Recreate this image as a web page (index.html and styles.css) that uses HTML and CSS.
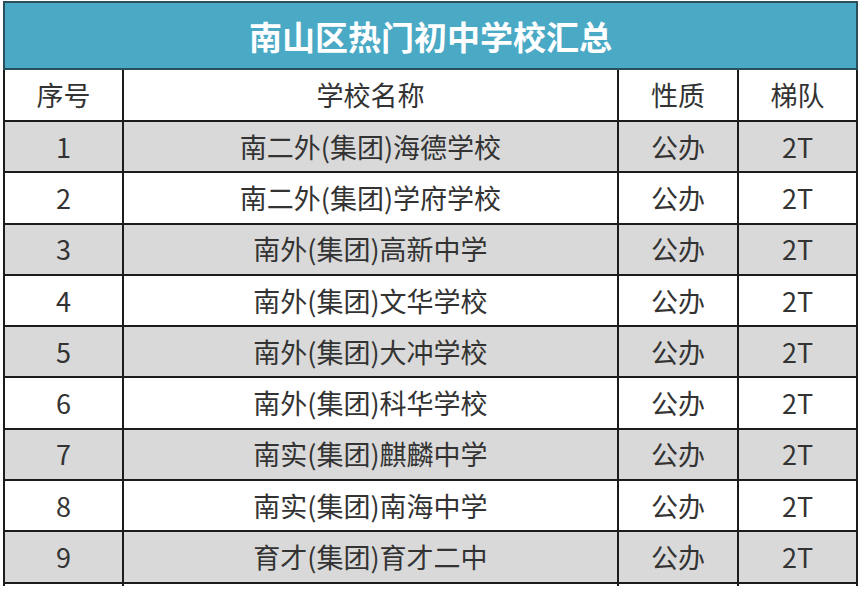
FILE: index.html
```html
<!DOCTYPE html>
<html lang="zh-CN">
<head>
<meta charset="utf-8">
<title>南山区热门初中学校汇总</title>
<link rel="stylesheet" href="styles.css">
</head>
<body>
<table class="sheet">
  <colgroup>
    <col class="c-no">
    <col class="c-name">
    <col class="c-type">
    <col class="c-tier">
  </colgroup>
  <thead>
    <tr class="title-row"><th colspan="4"><span class="title">南山区热门初中学校汇总</span></th></tr>
    <tr class="head-row"><th>序号</th><th>学校名称</th><th>性质</th><th>梯队</th></tr>
  </thead>
  <tbody>
    <tr class="alt"><td>1</td><td>南二外(集团)海德学校</td><td>公办</td><td>2T</td></tr>
    <tr><td>2</td><td>南二外(集团)学府学校</td><td>公办</td><td>2T</td></tr>
    <tr class="alt"><td>3</td><td>南外(集团)高新中学</td><td>公办</td><td>2T</td></tr>
    <tr><td>4</td><td>南外(集团)文华学校</td><td>公办</td><td>2T</td></tr>
    <tr class="alt"><td>5</td><td>南外(集团)大冲学校</td><td>公办</td><td>2T</td></tr>
    <tr><td>6</td><td>南外(集团)科华学校</td><td>公办</td><td>2T</td></tr>
    <tr class="alt"><td>7</td><td>南实(集团)麒麟中学</td><td>公办</td><td>2T</td></tr>
    <tr><td>8</td><td>南实(集团)南海中学</td><td>公办</td><td>2T</td></tr>
    <tr class="alt"><td>9</td><td>育才(集团)育才二中</td><td>公办</td><td>2T</td></tr>
    <tr class="cut"><td></td><td></td><td></td><td></td></tr>
  </tbody>
</table>
</body>
</html>
```
FILE: styles.css
```css
html, body {
  margin: 0;
  padding: 0;
  background: #ffffff;
  overflow: hidden;
}
body {
  padding: 1px 0 0 3px;
  height: 589px;
  box-sizing: border-box;
}
.sheet {
  border-collapse: collapse;
  table-layout: fixed;
  width: 853px;
  font-family: "Noto Sans CJK SC", "Noto Sans", sans-serif;
  color: #333333;
}
.c-no { width: 119px; }
.c-name { width: 495px; }
.c-type { width: 120px; }
.c-tier { width: 119px; }
.sheet th, .sheet td {
  border: 2px solid #1c1c1c;
  padding: 0;
  text-align: center;
  vertical-align: middle;
  font-weight: normal;
  font-size: 27px;
  line-height: 30px;
}
.title-row th {
  height: 65px;
  background: #4aa9c5;
  border-color: #2a4f5c;
  color: #ffffff;
  font-weight: bold;
  font-size: 33px;
  line-height: 40px;
  letter-spacing: 0;
}
.head-row th {
  height: 50px;
  background: #ffffff;
}
.sheet tbody td {
  height: 49.3px;
  background: #ffffff;
}
.sheet tbody tr.alt td {
  background: #d9d9d9;
}
.sheet tbody tr.cut td {
  height: 2px;
  line-height: 2px;
  border-bottom: 0;
}
```
